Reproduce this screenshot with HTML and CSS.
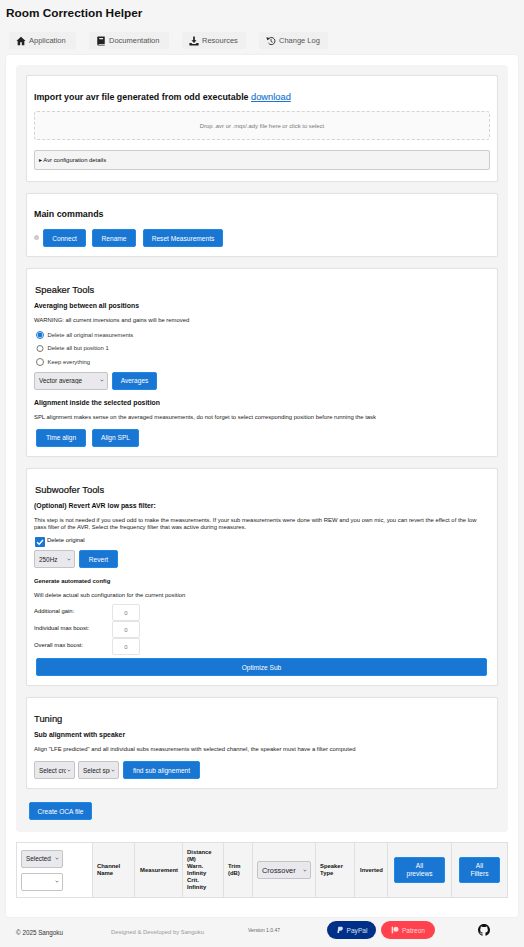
FILE: index.html
```html
<!DOCTYPE html>
<html lang="en">
<head>
    <meta charset="UTF-8">
    <meta name="viewport" content="width=device-width, initial-scale=1.0">
    <title>Room Correction Helper</title>
    <link rel="stylesheet" href="styles.css">
</head>
<body>

    <h1 class="app-title">Room Correction Helper</h1>

    <nav class="tabs">
        <a class="tab tab-app">
            <svg class="tab-icon" viewBox="0 0 24 24"><path d="M12 2 1 12h3v10h6v-7h4v7h6V12h3z"/></svg>
            Application
        </a>
        <a class="tab tab-doc">
            <svg class="tab-icon" viewBox="0 0 24 24"><path d="M5 1h15a1 1 0 0 1 1 1v16a1 1 0 0 1-1 1H6.500a1.500 1.500 0 0 0 0 2H21v2H6a3 3 0 0 1-3-3V3a2 2 0 0 1 2-2zm3 4v3h9V5z" fill-rule="evenodd"/></svg>
            Documentation
        </a>
        <a class="tab tab-res">
            <svg class="tab-icon" viewBox="0 0 24 24"><path d="M10 1h4v9h4l-6 7-6-7h4zM1 17h5l2 2h8l2-2h5v6H1z"/></svg>
            Resources
        </a>
        <a class="tab tab-log">
            <svg class="tab-icon" viewBox="0 0 24 24"><path d="M5 9a8.500 8.500 0 1 1 1 8" fill="none" stroke="currentColor" stroke-width="2.200"/><path d="M1 3l7 2-5 5z"/><path d="M12 7v6l4 2" fill="none" stroke="currentColor" stroke-width="2"/></svg>
            Change Log
        </a>
    </nav>

    <main class="page">
        <div class="panel">

            <section class="card card-import">
                <h3 class="import-title">Import your avr file generated from odd executable <a class="link">download</a></h3>
                <div class="dropzone">Drop .avr or .mqx/.ady file here or click to select</div>
                <div class="details">&#9656; Avr configuration details</div>
            </section>

            <section class="card card-main">
                <h3 class="main-title">Main commands</h3>
                <div class="row">
                    <span class="status-dot"></span>
                    <button class="btn btn-connect">Connect</button>
                    <button class="btn btn-rename">Rename</button>
                    <button class="btn btn-reset">Reset Measurements</button>
                </div>
            </section>

            <section class="card card-speaker">
                <h3 class="tool-title">Speaker Tools</h3>
                <h4 class="sub-title">Averaging between all positions</h4>
                <p class="note">WARNING: all current inversions and gains will be removed</p>
                <div class="radios">
                    <label class="radio"><input type="radio" name="del" checked> Delete all original measurements</label>
                    <label class="radio"><input type="radio" name="del"> Delete all but position 1</label>
                    <label class="radio"><input type="radio" name="del"> Keep everything</label>
                </div>
                <div class="row row-avg">
                    <select class="sel sel-avg"><option>Vector average</option></select>
                    <button class="btn btn-avg">Averages</button>
                </div>
                <h4 class="sub-title sub-align">Alignment inside the selected position</h4>
                <p class="note">SPL alignment makes sense on the averaged measurements, do not forget to select corresponding position before running the task</p>
                <div class="row row-align">
                    <button class="btn btn-time">Time align</button>
                    <button class="btn btn-spl">Align SPL</button>
                </div>
            </section>

            <section class="card card-sub">
                <h3 class="tool-title">Subwoofer Tools</h3>
                <h4 class="sub-title">(Optional) Revert AVR low pass filter:</h4>
                <p class="note note-long">This step is not needed if you used odd to make the measurements. If your sub measurements were done with REW and you own mic, you can revert the effect of the low pass filter of the AVR. Select the frequency filter that was active during measures.</p>
                <label class="check"><span class="check-box"><svg viewBox="0 0 10 10"><path d="M2 5.200 4.200 7.300 8 3" fill="none" stroke="#fff" stroke-width="1.300"/></svg></span>Delete original</label>
                <div class="row row-revert">
                    <select class="sel sel-freq"><option>250Hz</option></select>
                    <button class="btn btn-revert">Revert</button>
                </div>
                <h4 class="sub-small">Generate automated config</h4>
                <p class="note">Will delete actual sub configuration for the current position</p>
                <div class="fields">
                    <label class="field"><span class="field-label">Additional gain:</span><input class="num" value="0"></label>
                    <label class="field"><span class="field-label">Individual max boost:</span><input class="num" value="0"></label>
                    <label class="field"><span class="field-label">Overall max boost:</span><input class="num" value="0"></label>
                </div>
                <button class="btn btn-wide">Optimize Sub</button>
            </section>

            <section class="card card-tune">
                <h3 class="tool-title tune-title">Tuning</h3>
                <h4 class="sub-title">Sub alignment with speaker</h4>
                <p class="note">Align "LFE predicted" and all individual subs measurements with selected channel, the speaker must have a filter computed</p>
                <div class="row row-tune">
                    <select class="sel sel-tune"><option>Select crossover</option></select>
                    <select class="sel sel-tune"><option>Select speaker</option></select>
                    <button class="btn btn-find">find sub alignement</button>
                </div>
            </section>

            <button class="btn btn-oca">Create OCA file</button>
        </div>

        <table class="meas">
            <tr>
                <th class="col-sel">
                    <select class="sel sel-selected"><option>Selected</option></select>
                    <select class="sel sel-blank"><option></option></select>
                </th>
                <th class="col-name">Channel Name</th>
                <th class="col-meas">Measurement</th>
                <th class="col-dist">Distance (M)<br>Warn. Infinity<br>Crit. Infinity</th>
                <th class="col-trim">Trim (dB)</th>
                <th class="col-cross"><select class="sel sel-cross"><option>Crossover</option></select></th>
                <th class="col-type">Speaker Type</th>
                <th class="col-inv">Inverted</th>
                <th class="col-prev"><button class="btn btn-table">All<br>previews</button></th>
                <th class="col-filt"><button class="btn btn-table">All<br>Filters</button></th>
            </tr>
        </table>
    </main>

    <footer class="foot">
        <span class="copy">&copy; 2025 Sangoku</span>
        <span class="designed">Designed &amp; Developed by Sangoku</span>
        <span class="version">Version 1.0.47</span>
        <a class="pill pill-paypal">
            <svg viewBox="0 0 24 24"><path d="M7 2h8c4 0 6 2 5.500 5.500C20 12 17 14 13 14h-3l-1 7H4z"/></svg>
            PayPal
        </a>
        <a class="pill pill-patreon">
            <svg viewBox="0 0 24 24"><rect x="2" y="2" width="4.500" height="20"/><circle cx="15" cy="9.500" r="7.500"/></svg>
            Patreon
        </a>
        <svg class="github" viewBox="0 0 16 16"><path d="M8 0C3.580 0 0 3.580 0 8c0 3.540 2.290 6.530 5.470 7.590.4.070.55-.17.55-.38 0-.19-.01-.82-.01-1.490-2.010.37-2.530-.49-2.690-.94-.09-.23-.48-.94-.82-1.130-.28-.15-.68-.52-.01-.53.63-.01 1.080.58 1.230.82.720 1.210 1.870.87 2.330.66.070-.52.280-.87.510-1.070-1.780-.2-3.640-.89-3.640-3.950 0-.87.310-1.590.82-2.150-.08-.2-.36-1.020.08-2.120 0 0 .67-.21 2.200.82.640-.18 1.320-.27 2-.27s1.360.09 2 .27c1.530-1.040 2.200-.82 2.200-.82.440 1.100.16 1.920.08 2.120.51.560.82 1.270.82 2.150 0 3.070-1.870 3.750-3.650 3.950.29.250.54.730.54 1.480 0 1.070-.01 1.930-.01 2.200 0 .21.150.46.550.38A8.010 8.010 0 0 0 16 8c0-4.420-3.580-8-8-8z"/></svg>
    </footer>

</body>
</html>
```

FILE: styles.css
```css
* {
    box-sizing: border-box;
}
body {
    font-family: "Liberation Sans", Arial, sans-serif;
    margin: 0;
    background-color: #f5f5f5;
    color: #111;
}
.app-title {
    font-size: 11.800px;
    line-height: 14px;
    font-weight: bold;
    margin: 0;
    padding: 6px 0 0 6px;
}
.tabs {
    display: flex;
    gap: 13px;
    padding: 12px 0 0 9px;
}
.tab {
    display: flex;
    align-items: center;
    height: 17px;
    padding: 0 6px 0 7px;
    gap: 3px;
    font-size: 7.500px;
    color: #555;
    background-color: #f0f0f0;
    border-radius: 2px;
}
.tab-icon {
    width: 10px;
    height: 10px;
    fill: #222;
    color: #222;
    flex: none;
}
.tab-app { width: 67px; }
.tab-doc { width: 80px; }
.tab-res { width: 64px; }
.tab-log { width: 69px; }

.page {
    margin: 6px 6px 0;
    padding: 10px 10px 20px;
    height: 862px;
    background-color: #fff;
    border-radius: 3px;
    box-shadow: 0 0 2px rgba(0, 0, 0, 0.08);
}
.panel {
    height: 767px;
    padding: 10px 10px 0;
    background-color: #f4f4f4;
    border-radius: 4px;
}
.card {
    background-color: #fff;
    border: 1px solid #e2e2e2;
    border-radius: 2px;
    padding: 0 7px;
    margin-bottom: 11px;
    box-shadow: 0 0 1px rgba(0, 0, 0, 0.08);
}
.card-import { height: 107px; }
.card-main { height: 64px; }
.card-speaker { height: 189px; }
.card-sub { height: 218px; }
.card-tune { height: 92px; margin-bottom: 13px; }

h3, h4, p {
    margin: 0;
}
.import-title {
    font-size: 8.900px;
    line-height: 12px;
    padding-top: 15px;
}
.link {
    color: #1976d2;
    text-decoration: underline;
    font-weight: normal;
    font-size: 9.300px;
    -webkit-text-stroke: 0.15px #1976d2;
}
.dropzone {
    margin-top: 8px;
    height: 29px;
    font-size: 5.900px;
    color: #777;
    line-height: 28px;
    text-align: center;
    background-color: #fafafa;
    border: 1px dashed #d4d4d4;
    border-radius: 3px;
}
.details {
    margin-top: 10px;
    height: 20px;
    padding-left: 4px;
    font-size: 5.900px;
    line-height: 18px;
    background-color: #f4f4f4;
    border: 1px solid #ccc;
    border-radius: 2px;
}
.main-title {
    font-size: 8.900px;
    line-height: 12px;
    padding-top: 14px;
}
.tool-title {
    font-size: 9.400px;
    line-height: 12px;
    padding-top: 15px;
    font-weight: normal;
    -webkit-text-stroke: 0.2px #111;
    padding-left: 1px;
}
.tune-title {
    padding-left: 0;
}
.sub-title {
    font-size: 6.900px;
    line-height: 8px;
    margin-top: 6px;
}
.sub-small {
    font-size: 5.900px;
    line-height: 8px;
    margin-top: 9px;
}
.sub-align {
    margin-top: 9px;
}
.note {
    font-size: 5.900px;
    line-height: 7px;
    margin-top: 7px;
    color: #222;
}
.note-long {
    margin-top: 7px;
}
.row {
    display: flex;
    align-items: center;
}
.btn {
    display: block;
    height: 18px;
    padding: 0;
    font-family: inherit;
    font-size: 6.600px;
    color: #fff;
    background-color: #1976d2;
    border: 1px solid #1e88e5;
    border-radius: 2px;
}
.card-main .row {
    margin-top: 9px;
}
.status-dot {
    width: 5px;
    height: 5px;
    margin: -2px 4px 0 0;
    border-radius: 50%;
    background-color: #ccc;
}
.btn-connect { width: 43px; margin-right: 6px; }
.btn-rename { width: 44px; margin-right: 7px; }
.btn-reset { width: 80px; }

.radios {
    margin-top: 4px;
}
.radio {
    display: flex;
    align-items: center;
    height: 13.500px;
    font-size: 5.900px;
    color: #333;
}
.radio input {
    width: 7.500px;
    height: 7.500px;
    margin: 0 4px 0 2px;
    accent-color: #1976d2;
}
.sel {
    appearance: none;
    height: 18px;
    padding: 0 8px 0 4px;
    font-family: inherit;
    font-size: 6.400px;
    color: #222;
    background-color: #e9e9ed;
    background-image: url("data:image/svg+xml,%3Csvg xmlns='http://www.w3.org/2000/svg' viewBox='0 0 6 4'%3E%3Cpath d='M1 1l2 2 2-2' fill='none' stroke='%23333' stroke-width='.9'/%3E%3C/svg%3E");
    background-repeat: no-repeat;
    background-position: right 3px center;
    background-size: 4px 3px;
    border: 1px solid #c4c4c4;
    border-radius: 2px;
}
.row-avg {
    margin-top: 3px;
    gap: 4px;
}
.sel-avg { width: 74px; }
.btn-avg { width: 45px; }
.row-align {
    margin-top: 8px;
    padding-left: 2px;
    gap: 6px;
}
.btn-time { width: 50px; }
.btn-spl { width: 47px; }

.check {
    display: flex;
    align-items: flex-start;
    height: 10px;
    margin-top: 6px;
    font-size: 5.900px;
    line-height: 7px;
}
.check-box {
    width: 10px;
    height: 10px;
    margin: 0 2px 0 1px;
    background-color: #1976d2;
    border-radius: 1px;
}
.check-box svg {
    display: block;
}
.row-revert {
    margin-top: 3px;
    gap: 4px;
}
.sel-freq { width: 41px; }
.btn-revert { width: 39px; }
.fields {
    margin-top: 5px;
}
.field {
    display: flex;
    align-items: flex-start;
    height: 17px;
    font-size: 5.900px;
}
.field-label {
    width: 78px;
    padding-top: 4px;
}
.num {
    width: 28px;
    height: 17px;
    padding: 0;
    font-family: inherit;
    font-size: 5.900px;
    color: #777;
    text-align: center;
    background-color: #fff;
    border: 1px solid #e4e4e4;
    border-radius: 2px;
}
.btn-wide {
    width: 451px;
    margin: 3px 0 0 2px;
}
.row-tune {
    margin-top: 8px;
    gap: 3px;
}
.sel-tune { width: 41px; }
.btn-find { width: 77px; margin-left: 1px; }
.btn-oca {
    width: 63px;
    margin-left: 3px;
}

.meas {
    width: 492px;
    height: 56px;
    margin-top: 10px;
    table-layout: fixed;
    border-collapse: collapse;
    border: 1px solid #e0e0e0;
    background-color: #f4f4f4;
}
.meas th {
    padding: 0 4px;
    font-size: 5.900px;
    line-height: 7px;
    text-align: left;
    border: 1px solid #e0e0e0;
}
.meas .col-sel {
    width: 76px;
    background-color: #fff;
}
.col-name { width: 42px; }
.col-meas { width: 48px; }
.meas .col-meas { padding: 0 0 0 5px; }
.col-dist { width: 41px; }
.meas .col-dist { padding-right: 10px; }
.col-trim { width: 29px; }
.col-cross { width: 63px; }
.col-type { width: 39px; }
.col-inv { width: 33px; }
.meas .col-inv { padding: 0 0 0 5px; }
.col-prev { width: 64px; }
.col-filt { width: 56px; }
.meas .col-prev { padding: 0 6px; }
.meas .col-filt { padding: 0 7px; }
.sel-selected, .sel-blank {
    display: block;
    width: 42px;
}
.sel-blank {
    margin-top: 5px;
    background-color: #fff;
}
.sel-cross {
    width: 54px;
    font-size: 7.400px;
}
.btn-table {
    width: 100%;
    height: 26px;
    line-height: 8px;
}

.foot {
    display: flex;
    align-items: center;
    height: 30px;
    padding-left: 16px;
    color: #333;
}
.copy {
    width: 95px;
    font-size: 6.300px;
}
.designed {
    width: 137px;
    font-size: 5.900px;
    color: #999;
}
.version {
    width: 79px;
    font-size: 5px;
    color: #666;
    margin-top: -4px;
}
.pill {
    display: flex;
    align-items: center;
    justify-content: center;
    gap: 3px;
    height: 18px;
    margin-top: -4px;
    font-size: 6.600px;
    border-radius: 9px;
}
.pill svg {
    width: 8px;
    height: 8px;
    fill: currentColor;
}
.pill-paypal {
    width: 49px;
    margin-right: 5px;
    color: #d6e0f5;
    background-color: #003087;
}
.pill-patreon {
    width: 54px;
    color: #ffd9dc;
    background-color: #ff424d;
}
.github {
    width: 12px;
    height: 12px;
    margin: -4px 0 0 43px;
    fill: #111;
}
```
